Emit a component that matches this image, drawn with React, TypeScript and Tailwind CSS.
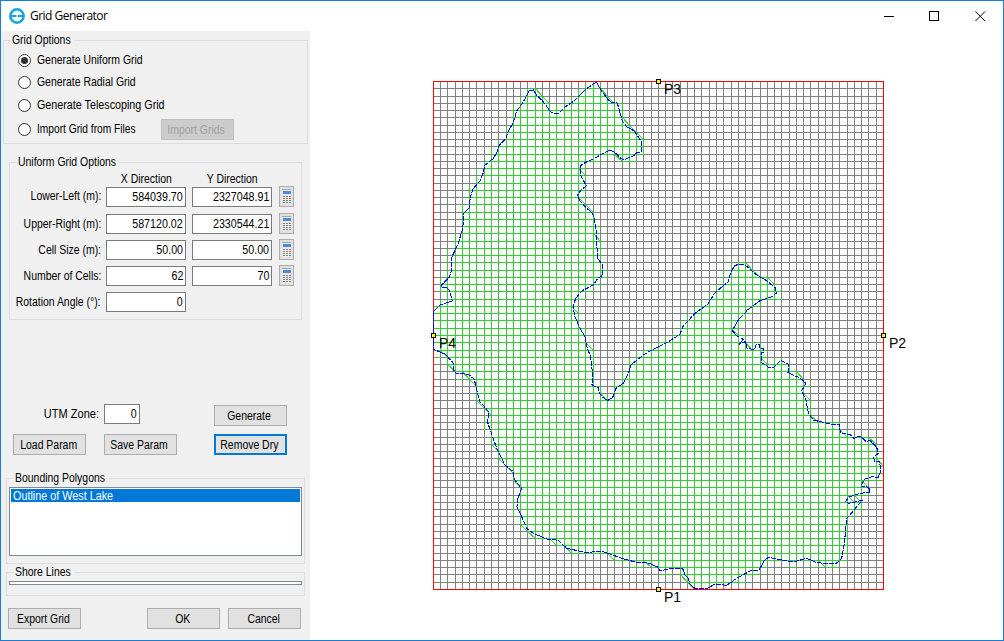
import React from "react";

type Pt = [number, number];

const OUTLINE =
  "463.3,214 469.3,207.7 470.3,196.7 473.3,188.3 480,181 483.7,171.7 484.3,165.7 493.3,158.3 497,152.3 499,145.7 506,138.3 508.3,131 513.3,122.7 516.7,111 521.7,104.3 526.3,96.7 529,90.7 533.3,90 536.7,95 543.3,101.7 551,112.3 554.3,113.7 559,113 565,107 574,101 586,89 596.3,82 601.7,91 607.7,99.3 611.7,102.3 617.3,103 619.3,110 622.3,121 626.7,126.7 634.3,131 641,141 641.7,151.7 637,152.7 633.3,156 624,159.7 620.7,158.3 615,152.3 610,150.3 603.7,153 595.7,157.7 585,162.7 580.3,165.7 580.3,175 586.3,185.7 581,190 577.7,195 580,201 586.7,208.3 591.7,212.3 594.3,218.3 596,230 596.7,243 597.7,258.3 602,264 603,275 597.7,278.3 593.3,285 581.7,291 575.7,298.3 573,306.7 575,316.7 580,328.3 585,336.7 587.3,348.3 590.7,356.7 592.3,371.7 592,385 598.3,387.7 599.3,393.3 603.3,397.7 607.3,400.7 612.7,397.3 616,388.3 623.3,383.3 628.7,372.7 630.7,365 643.3,355 651.7,350 666.7,342.7 680,334.3 682.7,326.7 695,313.3 707.7,304.3 715,292.7 728.3,281.7 731,271.7 735,265.3 741.7,264 747.3,266.7 756.7,275 766.7,280.7 775.7,288.3 776.3,293.3 771.7,296.7 760,300.7 748.3,309.3 738.3,320 732.3,330.7 736.7,335.7 743.3,339.3 739.7,344 745.3,341.7 747.3,348.7 754.3,349.3 756.3,344.7 759.3,344.7 760,348.3 763.7,348.7 763.3,352.3 761,353 761.7,362.7 768.3,367 774,367 780.7,360.3 788.3,364.3 788,372.3 795,376 799.3,377.3 806,383.3 801.7,390.7 806,400 808.3,412.7 813.3,420 821.7,422 830,424 839.3,424.7 840.3,432.7 850,434.7 854,438.3 860,436 866,441.3 870,440.7 876.7,447.3 878.3,453.3 873.3,457.3 875,461.7 879.3,461.7 881,470 878.3,477.3 871.7,476.7 864,479.3 861,486.7 866,486 870,489.3 869.3,492.3 860,493.3 848.3,497.3 845.7,501.7 849,503.3 862.3,500.3 851.7,512.7 846.7,518.3 845.7,530 844.3,543.3 841.7,558.3 836.7,563 826.7,564 815,562 806.7,558.3 793.3,562 780,559.7 768.3,557.3 764,561 759,570 750.7,570.7 736.7,578.3 726.7,585.3 715,584 707.7,588.3 695.7,589 690,584.3 688.3,578.3 685,575 682.7,568.7 673.3,568.3 660,570.7 658.3,567.3 646.7,562.3 635,562 621.7,558.3 606.7,552.7 600,551 586.7,552.7 566.7,548.3 558.3,540.3 546.7,539 533.3,533.3 526.7,528.3 521.7,516.7 517,506.7 517.3,500 521.7,488.3 516.7,482.7 513.3,476.7 513.3,471.7 505,465 496.7,448.3 487.7,422.7 488.7,411.7 480,401.7 476.7,390 474.3,379.3 468.3,374.3 456,373.3 453.7,370 453,362.7 445,354 433.3,349.3 433.3,312 440,305 452.3,301 450,291.7 447,287.3 441.7,288 441.7,284.7 449,277.7 451.7,270 452,256.7 458.3,243.3 462.7,228.3 463.7,216.7";

const X0 = 433;
const Y0 = 81;
const COLS = 62;
const ROWS = 70;
const lake: Pt[] = OUTLINE.split(" ").map((s) => {
  const [x, y] = s.split(",").map(Number);
  return [x - X0, y - Y0];
});
const gx = (i: number) => Math.round(i * (450 / COLS) - 0.08);
const gy = (j: number) => Math.round(j * (508 / ROWS));

function inside(x: number, y: number) {
  let r = false;
  for (let i = 0, j = lake.length - 1; i < lake.length; j = i++) {
    const [xi, yi] = lake[i];
    const [xj, yj] = lake[j];
    if (yi > y !== yj > y && x < ((xj - xi) * (y - yi)) / (yj - yi) + xi) r = !r;
  }
  return r;
}

function buildMesh() {
  const wet = new Set<number>();
  const nodes = new Set<number>();
  const id = (i: number, j: number) => j * 100 + i;
  for (let j = 0; j < ROWS; j++)
    for (let i = 0; i < COLS; i++)
      if (inside((gx(i) + gx(i + 1)) / 2, (gy(j) + gy(j + 1)) / 2)) {
        wet.add(id(i, j));
        [id(i, j), id(i + 1, j), id(i, j + 1), id(i + 1, j + 1)].forEach((n) => nodes.add(n));
      }
  let edges = "";
  let diagonals = "";
  for (let j = 0; j < ROWS; j++)
    for (let i = 0; i < COLS; i++) {
      const l = gx(i) + 0.5, r = gx(i + 1) + 0.5, t = gy(j) + 0.5, b = gy(j + 1) + 0.5;
      if (wet.has(id(i, j))) {
        edges += `M${l} ${t}H${r}V${b}H${l}V${t}`;
        continue;
      }
      let touched = false;
      for (let a = 1; a < 6 && !touched; a++)
        for (let c = 1; c < 6 && !touched; c++)
          touched = inside(l + ((r - l) * a) / 6, t + ((b - t) * c) / 6);
      if (!touched) continue;
      const tl = nodes.has(id(i, j));
      const br = nodes.has(id(i + 1, j + 1));
      if (tl && br) diagonals += `M${l} ${t}L${r} ${b}`;
      else if (!tl) edges += `M${l} ${t}V${b}`;
      else edges += `M${l} ${b}H${r}`;
    }
  let base = "";
  for (let i = 1; i < COLS; i++) base += `M${gx(i) + 0.5} 0V508`;
  for (let j = 1; j < ROWS; j++) base += `M0 ${gy(j) + 0.5}H450`;
  return { edges, diagonals, base };
}
const mesh = buildMesh();

function Mesh() {
  const marks: Pt[] = [[225, 0], [450, 254], [225, 508], [0, 254]];
  return (
    <svg width="451" height="509" viewBox="0 0 451 509" className="block overflow-visible">
      <g fill="none" strokeWidth="1" shapeRendering="crispEdges">
        <path d={mesh.base} stroke="#808080" />
        <path d={mesh.edges} stroke="#32cd32" />
        <path d={mesh.diagonals} stroke="#32cd32" />
        <rect x="0.5" y="0.5" width="450" height="508" stroke="#ff0000" />
        <polygon points={lake.map((p) => p.join(",")).join(" ")} stroke="#0000ff" strokeDasharray="5 1" />
      </g>
      {marks.map(([x, y]) => (
        <rect key={`${x}-${y}`} x={x - 1.5} y={y - 1.5} width="4" height="4" fill="#ffff00" stroke="#000" shapeRendering="crispEdges" />
      ))}
      <g fontFamily="Liberation Sans, Arial, sans-serif" fontSize="14" fill="#000">
        <text x="231" y="13">P3</text>
        <text x="456" y="267">P2</text>
        <text x="231" y="521">P1</text>
        <text x="6" y="267">P4</text>
      </g>
    </svg>
  );
}

function T({ children, className = "origin-left scale-x-[0.87]" }: { children: React.ReactNode; className?: string }) {
  return <span className={`inline-block whitespace-nowrap ${className}`}>{children}</span>;
}

function Btn({ children, className = "border border-[#adadad] bg-[#e1e1e1]" }: { children: string; className?: string }) {
  return (
    <button className={`flex h-[21px] w-[73px] shrink-0 items-center justify-center pr-[2px] pt-px ${className}`}>
      <T className="origin-center scale-x-[0.87]">{children}</T>
    </button>
  );
}

function Radio({ label, on = false, className = "h-[22px]", text }: { label: string; on?: boolean; className?: string; text?: string }) {
  return (
    <div className={`flex items-center gap-[6px] ${className}`}>
      <span className="flex size-[13px] shrink-0 items-center justify-center rounded-full border border-[#333] bg-white">
        {on && <span className="size-[7px] rounded-full bg-[#333]" />}
      </span>
      <T className={text}>{label}</T>
    </div>
  );
}

function Field({ value, className = "w-20" }: { value: string; className?: string }) {
  return (
    <div className={`flex h-5 shrink-0 items-center justify-end border border-[#7a7a7a] bg-white pr-[2px] ${className}`}>
      <T className="origin-right scale-x-[0.89]">{value}</T>
    </div>
  );
}

function Calc() {
  return (
    <button className="flex h-[21px] w-[15px] items-center justify-center border border-[#adadad] bg-[#e1e1e1]">
      <svg width="11" height="17" viewBox="0 0 11 17" shapeRendering="crispEdges">
        <rect x="1" y="1" width="9" height="15" fill="#eaeaea" />
        <rect x="1" y="1" width="9" height="1" fill="#a5a5a5" />
        <rect x="2" y="3" width="8" height="3" fill="#4a8bd8" />
        {[8, 10, 12, 14].map((y) =>
          [2, 5, 8].map((x) => (
            <rect key={`${x}-${y}`} x={x} y={y} width="2" height="1" fill={x === 8 && y === 8 ? "#e3554a" : "#808080"} />
          ))
        )}
      </svg>
    </button>
  );
}

function GridRow({ label, x, y, className, labelClass = "" }: { label: string; x: string; y?: string; className: string; labelClass?: string }) {
  return (
    <div className={`flex items-center ${className}`}>
      <div className={`mr-[5px] flex w-[91px] shrink-0 justify-end ${labelClass}`}><T className="origin-right scale-x-[0.87]">{label}</T></div>
      <Field value={x} />
      {y && (
        <>
          <Field value={y} className="ml-[6px] w-20" />
          <span className="mb-px ml-[7px] flex"><Calc /></span>
        </>
      )}
    </div>
  );
}

function Legend({ children, className }: { children: string; className: string }) {
  return (
    <legend className={`h-4 leading-4 ${className}`}>
      <T>{children}</T>
    </legend>
  );
}

export default function App() {
  return (
    <div className="flex h-[641px] w-[1004px] flex-col overflow-hidden border border-[#1a7fd4] bg-white font-['Liberation_Sans',Arial,sans-serif] text-[12px] leading-[14px] text-black">
      <header className="flex h-[30px] shrink-0 items-center">
        <svg width="16" height="16" viewBox="0 0 16 16" className="ml-2" fill="none" stroke="#10a5e8">
          <circle cx="8" cy="8" r="6.7" strokeWidth="2.5" />
          <path d="M2 8H7.4M8.6 8H14" strokeWidth="2" />
        </svg>
        <span className="ml-[5px] font-['Open_Sans','Noto_Sans',sans-serif] text-[12px] tracking-[-0.52px]">Grid Generator</span>
        <svg width="110" height="14" viewBox="0 0 110 14" className="ml-auto mr-[13px]" fill="none" stroke="#000">
          <path d="M4 7.5H14" shapeRendering="crispEdges" />
          <rect x="49.5" y="2.5" width="9" height="9" shapeRendering="crispEdges" />
          <path d="M95.5 2.5L105 12M105 2.5L95.5 12" />
        </svg>
      </header>
      <main className="flex min-h-0 flex-1">
        <aside className="flex w-[309px] shrink-0 flex-col bg-[#f0f0f0] pt-px">
          <fieldset className="ml-[2px] h-[112px] w-[305px] border border-[#dcdcdc] pl-[14px]">
            <Legend className="-ml-[8px] w-[64px] pl-[2px]">Grid Options</Legend>
            <div className="pt-px">
              <Radio label="Generate Uniform Grid" on />
              <Radio label="Generate Radial Grid" />
              <Radio label="Generate Telescoping Grid" className="h-6" text="origin-left scale-x-[0.895]" />
              <div className="flex h-6 items-center">
                <div className="w-[143px]"><Radio label="Import Grid from Files" className="h-6" text="origin-left scale-x-[0.85]" /></div>
                <Btn className="border border-[#bfbfbf] bg-[#cccccc] text-[#a0a0a0]">Import Grids</Btn>
              </div>
            </div>
          </fieldset>
          <fieldset className="ml-[8px] mt-[10px] h-[166px] w-[293px] border border-[#dcdcdc]">
            <Legend className="ml-[6px] w-[102px] pl-[2px]">Uniform Grid Options</Legend>
            <div className="ml-[96px] flex h-4 items-center gap-[6px] pt-px text-center">
              <div className="w-20"><T className="origin-center scale-x-[0.87]">X Direction</T></div>
              <div className="w-20"><T className="origin-center scale-x-[0.87]">Y Direction</T></div>
            </div>
            <GridRow label="Lower-Left (m):" x="584039.70" y="2327048.91" className="h-[22px]" labelClass="pb-[2px]" />
            <GridRow label="Upper-Right (m):" x="587120.02" y="2330544.21" className="mt-[3px] h-[26px]" />
            <GridRow label="Cell Size (m):" x="50.00" y="50.00" className="h-[26px]" />
            <GridRow label="Number of Cells:" x="62" y="70" className="h-[26px]" />
            <GridRow label="Rotation Angle (°):" x="0" className="h-[26px]" />
          </fieldset>
          <div className="mt-[83px] flex h-[22px] items-center pl-[103px]">
            <div className="-ml-[70px] mr-[5px] flex w-[65px] justify-end"><T className="origin-right scale-x-[0.92]">UTM Zone:</T></div>
            <Field value="0" className="w-9" />
            <div className="ml-[74px] mt-[2px]"><Btn>Generate</Btn></div>
          </div>
          <div className="mt-[9px] flex pl-[12px]">
            <Btn>Load Param</Btn>
            <span className="w-[18px]" />
            <Btn>Save Param</Btn>
            <span className="w-[37px]" />
            <Btn className="border-2 border-[#0078d7] bg-[#e1e1e1]">Remove Dry</Btn>
          </div>
          <fieldset className="ml-[5px] mt-[15px] h-[94px] w-[299px] border border-[#dcdcdc] px-[2px]">
            <Legend className="ml-[4px] w-[96px] pl-[2px]">Bounding Polygons</Legend>
            <div className="mt-px h-[69px] border border-[#828790] bg-white p-px">
              <div className="flex h-[13px] items-center bg-[#0078d7] pl-[2px] text-white"><T className="origin-left scale-x-[0.9]">Outline of West Lake</T></div>
            </div>
          </fieldset>
          <fieldset className="ml-[5px] h-8 w-[299px] border border-[#dcdcdc] px-[2px]">
            <Legend className="ml-[4px] w-[62px] pl-[2px]">Shore Lines</Legend>
            <div className="mt-px h-[4px] border border-[#828790] bg-white" />
          </fieldset>
          <div className="mt-[12px] flex pl-[7px]">
            <Btn>Export Grid</Btn>
            <span className="w-[66px]" />
            <Btn>OK</Btn>
            <span className="w-[8px]" />
            <Btn>Cancel</Btn>
          </div>
        </aside>
        <section className="pl-[123px] pt-[50px]">
          <Mesh />
        </section>
      </main>
    </div>
  );
}
